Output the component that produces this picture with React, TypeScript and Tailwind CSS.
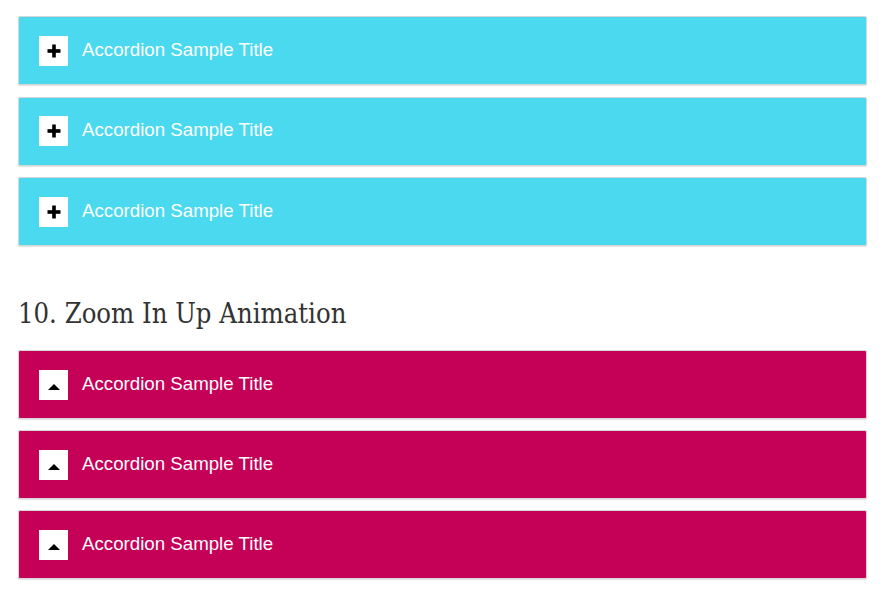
import React from "react";

function Plus() {
  return (
    <svg width="14" height="14" viewBox="0 0 14 14">
      <rect x="5.2" y="0.5" width="3.6" height="13" fill="#000" />
      <rect x="0.5" y="5.2" width="13" height="3.6" fill="#000" />
    </svg>
  );
}

function Caret() {
  return (
    <svg width="12" height="6" viewBox="0 0 12 6">
      <path d="M6 0 L12 6 L0 6 Z" fill="#000" />
    </svg>
  );
}

function Panel({ color, icon }: { color: string; icon: "plus" | "caret" }) {
  return (
    <div
      className={`h-[69px] w-full rounded-[2px] border border-[#d6d6d6] shadow-[0_1px_1px_rgba(0,0,0,0.12)] flex items-center pl-[20px] ${color}`}
    >
      <div className="w-[29px] h-[30px] bg-white flex items-center justify-center">
        {icon === "plus" ? <Plus /> : <div className="mt-[4px]"><Caret /></div>}
      </div>
      <span
        className="ml-[14px] text-white text-[18.7px] leading-none -mt-[1px]"
        style={{ fontFamily: '"Liberation Sans", Arial, sans-serif' }}
      >
        Accordion Sample Title
      </span>
    </div>
  );
}

export default function App() {
  return (
    <div className="w-[890px] h-[610px] bg-white">
      <div className="pt-[16px] pl-[18px] w-[867px] flex flex-col">
        <div className="flex flex-col gap-[11.5px]">
          <Panel color="bg-[#4ad9ee]" icon="plus" />
          <Panel color="bg-[#4ad9ee]" icon="plus" />
          <Panel color="bg-[#4ad9ee]" icon="plus" />
        </div>
        <h2
          className="mt-[52px] mb-[20px] text-[27.2px] leading-[32px] text-[#333333] font-normal"
          style={{ fontFamily: '"DejaVu Serif Condensed", "DejaVu Serif", serif', fontStretch: "condensed" }}
        >
          10. Zoom In Up Animation
        </h2>
        <div className="flex flex-col gap-[11px]">
          <Panel color="bg-[#c40057]" icon="caret" />
          <Panel color="bg-[#c40057]" icon="caret" />
          <Panel color="bg-[#c40057]" icon="caret" />
        </div>
      </div>
    </div>
  );
}
